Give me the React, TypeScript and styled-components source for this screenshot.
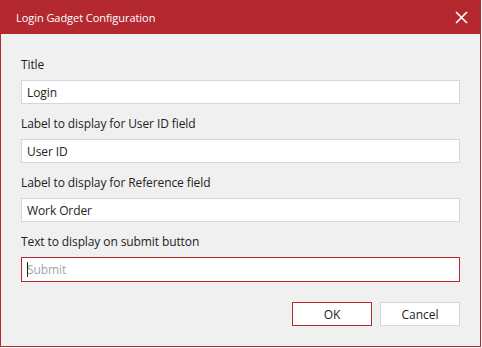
import React from 'react'
import styled, { createGlobalStyle } from 'styled-components'

const GlobalStyle = createGlobalStyle`
    html, body {
        margin: 0;
        padding: 0;
        background: #ffffff;
    }
    * {
        box-sizing: border-box;
    }
`

const Dialog = styled.div`
    width: 481px;
    height: 347px;
    border: 1px solid #b3292f;
    border-top: none;
    background: #f0f0f0;
    display: flex;
    flex-direction: column;
    font-family: "Open Sans", "Noto Sans", sans-serif;
`

const Header = styled.div`
    height: 34px;
    background: #b3292f;
    display: flex;
    align-items: center;
    justify-content: space-between;
    padding: 0 10px 0 16px;
    margin: 0 -1px;
`

const HeaderTitle = styled.span`
    color: #ffffff;
    font-size: 11px;
    letter-spacing: -0.05px;
`

const CloseButton = styled.button`
    width: 20px;
    height: 20px;
    border: none;
    background: transparent;
    padding: 0;
    display: flex;
    align-items: center;
    justify-content: center;
    cursor: pointer;
`

const Body = styled.div`
    flex: 1;
    padding: 22px 20px 0 20px;
    display: flex;
    flex-direction: column;
    gap: 11px;
`

const Field = styled.div`
    display: flex;
    flex-direction: column;
`

const Label = styled.label`
    display: block;
    height: 17px;
    font-size: 12px;
    line-height: 17px;
    color: #222222;
    margin-bottom: 7px;
    letter-spacing: -0.1px;
`

const InputBox = styled.div<{ $active?: boolean }>`
    position: relative;
    height: ${p => (p.$active ? '25px' : '24px')};
    border: 1px solid ${p => (p.$active ? '#b3292f' : '#d6d6dc')};
    background: #ffffff;
`

const TextInput = styled.input`
    display: block;
    width: 100%;
    height: 100%;
    border: none;
    background: transparent;
    padding: 0 5px;
    font-family: "Open Sans", "Noto Sans", sans-serif;
    font-size: 12px;
    color: #222222;
    outline: none;
    letter-spacing: -0.1px;

    &::placeholder {
        color: #a3a3ab;
    }
`

const Caret = styled.span`
    position: absolute;
    left: 5px;
    top: 4px;
    width: 1px;
    height: 15px;
    background: #222222;
`

const Footer = styled.div`
    display: flex;
    justify-content: flex-end;
    gap: 8px;
    margin-top: 9px;
`

const Button = styled.button<{ $primary?: boolean }>`
    width: 80px;
    height: 24px;
    background: #ffffff;
    border: 1px solid ${p => (p.$primary ? '#b3292f' : '#d6d6dc')};
    font-family: "Open Sans", "Noto Sans", sans-serif;
    font-size: 12px;
    color: #222222;
    padding: 0;
    cursor: pointer;
`

interface FieldDef {
    label: string
    value: string
    placeholder?: string
    active?: boolean
}

const fields: FieldDef[] = [
    { label: 'Title', value: 'Login' },
    { label: 'Label to display for User ID field', value: 'User ID' },
    { label: 'Label to display for Reference field', value: 'Work Order' },
    { label: 'Text to display on submit button', value: '', placeholder: 'Submit', active: true },
]

const App: React.FC = () => {
    return (
        <>
            <GlobalStyle />
            <Dialog>
                <Header>
                    <HeaderTitle>Login Gadget Configuration</HeaderTitle>
                    <CloseButton aria-label="Close">
                        <svg width="13" height="13" viewBox="0 0 13 13">
                            <path d="M1 1 L12 12 M12 1 L1 12" stroke="#ffffff" strokeWidth="1.6" />
                        </svg>
                    </CloseButton>
                </Header>
                <Body>
                    {fields.map(f => (
                        <Field key={f.label}>
                            <Label>{f.label}</Label>
                            <InputBox $active={f.active}>
                                <TextInput defaultValue={f.value} placeholder={f.placeholder} />
                                {f.active && <Caret />}
                            </InputBox>
                        </Field>
                    ))}
                    <Footer>
                        <Button $primary>OK</Button>
                        <Button>Cancel</Button>
                    </Footer>
                </Body>
            </Dialog>
        </>
    )
}

export default App
